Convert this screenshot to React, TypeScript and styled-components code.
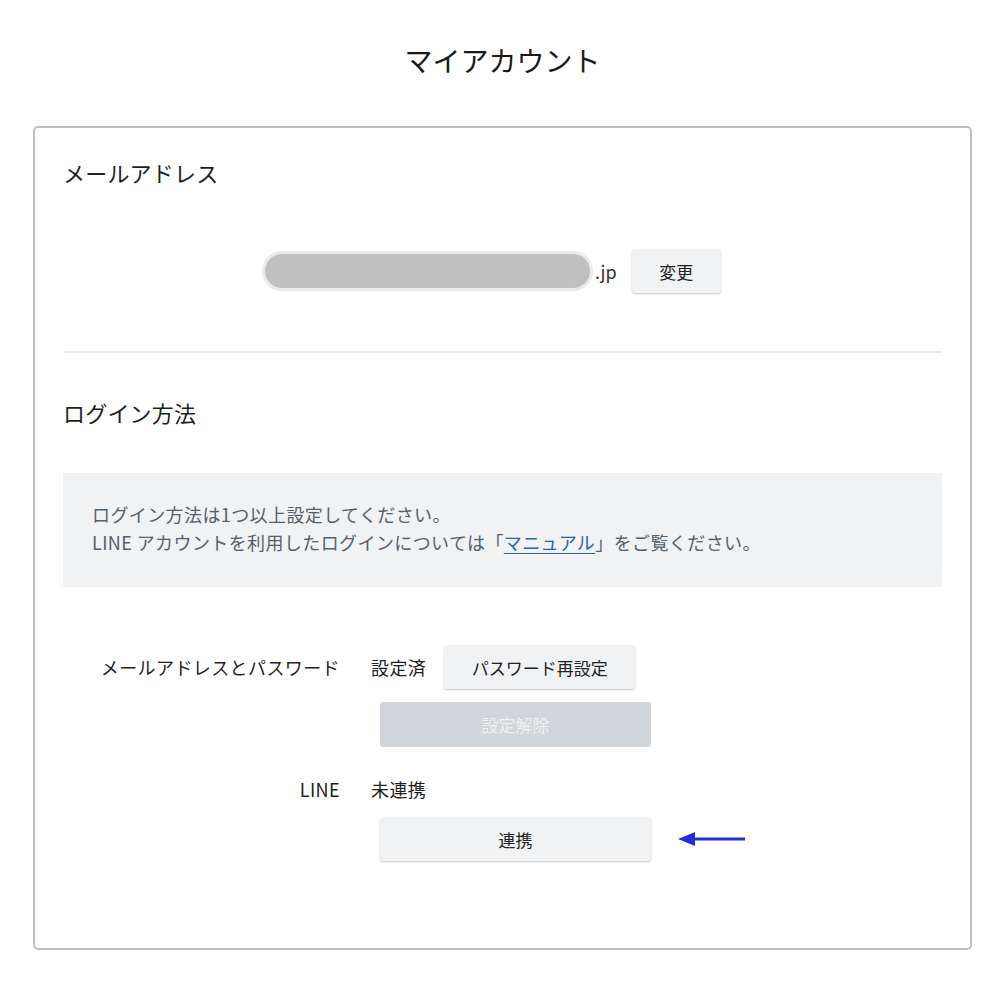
import React from "react";
import styled, { createGlobalStyle } from "styled-components";

const GlobalStyle = createGlobalStyle`
  body {
    margin: 0;
    background: #ffffff;
    color: #1f1f1f;
    font-family: "Noto Sans CJK JP", "Noto Sans", "Liberation Sans", sans-serif;
    text-spacing-trim: space-all;
  }
`;

const Page = styled.div`
  padding: 40px 0 30px 33px;
  width: 939px;
`;

const PageTitle = styled.h1`
  margin: 0 0 46px;
  font-size: 28px;
  line-height: 40px;
  font-weight: 400;
  text-align: center;
  color: #1a1a1a;
`;

const Card = styled.div`
  box-sizing: border-box;
  width: 939px;
  border: 2px solid #bcc1c6;
  border-radius: 5px;
  padding: 28px 28px 87px;
`;

const SectionTitle = styled.h2`
  margin: 0;
  font-size: 22px;
  line-height: 32px;
  font-weight: 400;
  letter-spacing: 0.2px;
`;

const EmailRow = styled.div`
  display: flex;
  align-items: center;
  height: 44px;
  margin-top: 61px;
  padding-left: 199px;
`;

const MaskedEmail = styled.div`
  box-sizing: border-box;
  width: 331px;
  height: 40px;
  border: 3px solid #ebebeb;
  border-radius: 20px;
  background: #c0c0c0;
`;

const Domain = styled.span`
  margin-left: 2px;
  font-size: 18px;
  color: #333;
`;

const Button = styled.button<{ $width: number; $disabled?: boolean }>`
  box-sizing: border-box;
  width: ${(p) => p.$width}px;
  height: 44px;
  border: none;
  border-radius: 3px;
  background: ${(p) => (p.$disabled ? "#d1d6da" : "#f1f2f4")};
  color: ${(p) => (p.$disabled ? "#eef0f2" : "#222")};
  box-shadow: ${(p) => (p.$disabled ? "none" : "0 1px 2px rgba(0, 0, 0, 0.22)")};
  font-family: inherit;
  font-size: 17px;
  padding: 0;
  cursor: ${(p) => (p.$disabled ? "default" : "pointer")};
`;

const Divider = styled.hr`
  margin: 58px 0 43px;
  border: none;
  height: 2px;
  background: #ebebeb;
`;

const Notice = styled.div`
  margin-top: 45px;
  padding: 27px 29px 31px;
  background: #f0f2f4;
  color: #56606b;
  font-size: 18px;
  line-height: 28px;
  letter-spacing: 0.4px;
`;

const Link = styled.a`
  color: #2d62ad;
  text-decoration: underline;
  text-underline-offset: 3px;
`;

const Methods = styled.div`
  display: grid;
  grid-template-columns: 277px 1fr;
  column-gap: 31px;
  margin-top: 58px;
  font-size: 18px;
  letter-spacing: 0.4px;
`;

const MethodLabel = styled.div<{ $top: number }>`
  text-align: right;
  line-height: 26px;
  margin-top: ${(p) => p.$top}px;
`;

const MethodBody = styled.div<{ $top: number }>`
  margin-top: ${(p) => p.$top}px;
  display: flex;
  flex-direction: column;
  align-items: flex-start;
`;

const StatusLine = styled.div`
  display: flex;
  align-items: center;
  gap: 18px;
  line-height: 26px;
`;

const Indented = styled.div<{ $top: number }>`
  display: flex;
  align-items: center;
  margin: ${(p) => p.$top}px 0 0 9px;
`;

const ArrowMark = styled.svg`
  margin-left: 27px;
  display: block;
`;

export default function App() {
  return (
    <>
      <GlobalStyle />
      <Page>
        <PageTitle>マイアカウント</PageTitle>
        <Card>
          <SectionTitle>メールアドレス</SectionTitle>
          <EmailRow>
            <MaskedEmail />
            <Domain>.jp</Domain>
            <Button $width={89} style={{ marginLeft: 15 }}>
              変更
            </Button>
          </EmailRow>

          <Divider />

          <SectionTitle>ログイン方法</SectionTitle>
          <Notice>
            ログイン方法は1つ以上設定してください。
            <br />
            LINE アカウントを利用したログインについては「<Link href="#">マニュアル</Link>」をご覧ください。
          </Notice>

          <Methods>
            <MethodLabel $top={9}>メールアドレスとパスワード</MethodLabel>
            <MethodBody $top={0}>
              <StatusLine>
                <span>設定済</span>
                <Button $width={191}>パスワード再設定</Button>
              </StatusLine>
              <Indented $top={13}>
                <Button $width={271} $disabled style={{ height: 45 }}>
                  設定解除
                </Button>
              </Indented>
            </MethodBody>

            <MethodLabel $top={29}>LINE</MethodLabel>
            <MethodBody $top={29}>
              <StatusLine>
                <span>未連携</span>
              </StatusLine>
              <Indented $top={15}>
                <Button $width={271}>連携</Button>
                <ArrowMark width="67" height="16" viewBox="0 0 67 16">
                  <polygon points="0,8 17,1 17,15" fill="#1f2fd8" />
                  <rect x="15" y="6.5" width="52" height="3" fill="#1f2fd8" />
                </ArrowMark>
              </Indented>
            </MethodBody>
          </Methods>
        </Card>
      </Page>
    </>
  );
}
